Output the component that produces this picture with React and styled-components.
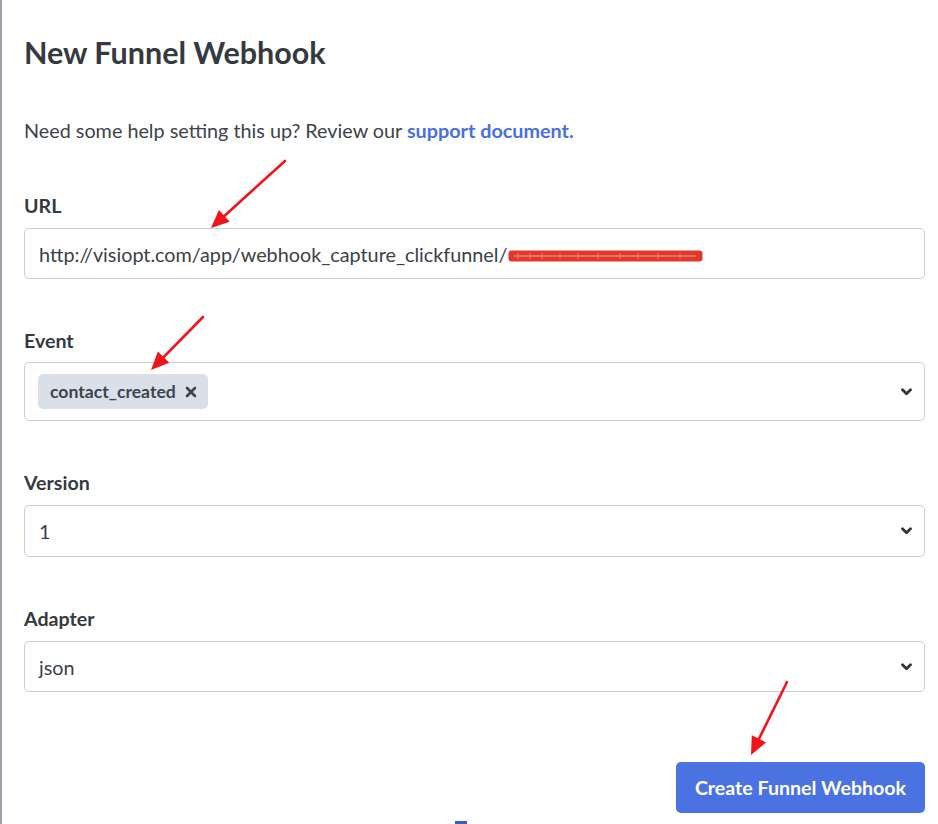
import React from "react";
import styled, { createGlobalStyle } from "styled-components";

const Global = createGlobalStyle`
  html, body {
    margin: 0;
    padding: 0;
    background: #ffffff;
  }
  body {
    font-family: Lato, "Noto Sans", "Liberation Sans", sans-serif;
    color: #343a40;
  }
`;

const Page = styled.div`
  position: relative;
  min-height: 824px;
  box-sizing: border-box;
  border-left: 2px solid #9aa1aa;
  padding: 34px 13px 0 22px;
  overflow: hidden;
`;

const Title = styled.h1`
  margin: 0;
  font-size: 30.5px;
  line-height: 36px;
  font-weight: 700;
  color: #343a40;
`;

const Help = styled.p`
  margin: 48px 0 0;
  font-size: 19.8px;
  line-height: 24px;
  color: #3d434a;
`;

const Link = styled.a`
  color: #4a6fe0;
  font-weight: 700;
  text-decoration: none;
`;

const Field = styled.div`
  margin-top: ${(p) => p.$top}px;
  display: flex;
  flex-direction: column;
  gap: ${(p) => p.$gap}px;
`;

const Label = styled.label`
  font-size: 19.6px;
  line-height: 24px;
  font-weight: 700;
  color: #343a40;
`;

const Box = styled.div`
  height: ${(p) => p.$h}px;
  box-sizing: border-box;
  border: 1px solid #c8cfd9;
  border-radius: 5px;
  display: flex;
  align-items: center;
  justify-content: space-between;
  padding: 0 12px 0 ${(p) => p.$pl}px;
  font-size: 19.8px;
  color: #3b4148;
  background: #fff;
`;

const Value = styled.span`
  display: flex;
  align-items: center;
  white-space: nowrap;
`;

const Redact = styled.span`
  display: inline-block;
  width: 195px;
  height: 12px;
  margin-left: 1px;
  margin-top: -12px;
`;

const Tag = styled.span`
  display: inline-flex;
  align-items: center;
  gap: 9px;
  height: 35px;
  padding: 0 11px 0 12px;
  border-radius: 5px;
  background: #dae0e8;
  font-size: 17.6px;
  font-weight: 700;
  color: #3a4450;
`;

const Footer = styled.div`
  margin-top: 70px;
  display: flex;
  justify-content: flex-end;
`;

const Button = styled.button`
  width: 249px;
  height: 51px;
  border: none;
  border-radius: 5px;
  background: #4b72e1;
  color: #ffffff;
  font-family: inherit;
  font-size: 19.6px;
  font-weight: 700;
  cursor: pointer;
`;

const Overlay = styled.svg`
  position: absolute;
  left: 0;
  top: 0;
  pointer-events: none;
`;

const Mark = styled.div`
  position: absolute;
  left: 453px;
  top: 821px;
  width: 12px;
  height: 3px;
  background: #3a5bd0;
`;

const Chevron = () => (
  <svg width="11" height="8" viewBox="0 0 11 8">
    <path d="M1.5 1.8 L5.5 5.8 L9.5 1.8" fill="none" stroke="#2f353b" strokeWidth="2.8" strokeLinecap="round" strokeLinejoin="round" />
  </svg>
);

const Cross = () => (
  <svg width="12" height="12" viewBox="0 0 12 12">
    <path d="M2 2 L10 10 M10 2 L2 10" stroke="#3a4450" strokeWidth="2.6" strokeLinecap="round" />
  </svg>
);

const Scribble = () => (
  <svg width="195" height="12" viewBox="0 0 195 12">
    <rect x="0.5" y="0.5" width="194" height="11" rx="3" fill="#e0392b" />
    <path d="M6 6 H188" stroke="#f3a59c" strokeWidth="1" />
    <path d="M10 3 V9 M22 3 V9 M34 3 V9 M52 3 V9 M70 3 V9 M90 3 V9 M112 3 V9 M130 3 V9 M150 3 V9 M172 3 V9" stroke="#ee7d70" strokeWidth="1" />
  </svg>
);

const Arrow = ({ x1, y1, x2, y2 }) => {
  const a = Math.atan2(y2 - y1, x2 - x1);
  const len = 18;
  const w = 8;
  const bx = x2 - len * Math.cos(a);
  const by = y2 - len * Math.sin(a);
  const px = -Math.sin(a) * w;
  const py = Math.cos(a) * w;
  return (
    <g>
      <line x1={x1} y1={y1} x2={bx} y2={by} stroke="#f0141a" strokeWidth="2.6" strokeLinecap="round" />
      <polygon points={`${x2},${y2} ${bx + px},${by + py} ${bx - px},${by - py}`} fill="#f0141a" />
    </g>
  );
};

export default function App() {
  return (
    <>
      <Global />
      <Page>
        <Title>New Funnel Webhook</Title>
        <Help>
          Need some help setting this up? Review our <Link href="#">support document.</Link>
        </Help>

        <Field $top={52} $gap={10}>
          <Label>URL</Label>
          <Box $h={51} $pl={14}>
            <Value>
              http://visiopt.com/app/webhook_capture_clickfunnel/
              <Redact>
                <Scribble />
              </Redact>
            </Value>
          </Box>
        </Field>

        <Field $top={50} $gap={9}>
          <Label>Event</Label>
          <Box $h={59} $pl={13}>
            <Tag>
              contact_created
              <Cross />
            </Tag>
            <Chevron />
          </Box>
        </Field>

        <Field $top={50} $gap={10}>
          <Label>Version</Label>
          <Box $h={52} $pl={14}>
            <Value>1</Value>
            <Chevron />
          </Box>
        </Field>

        <Field $top={50} $gap={10}>
          <Label>Adapter</Label>
          <Box $h={51} $pl={14}>
            <Value>json</Value>
            <Chevron />
          </Box>
        </Field>

        <Footer>
          <Button>Create Funnel Webhook</Button>
        </Footer>

        <Overlay width="938" height="824">
          <Arrow x1={283} y1={161} x2={209} y2={228} />
          <Arrow x1={201} y1={317} x2={149} y2={370} />
          <Arrow x1={785} y1={682} x2={749} y2={755} />
        </Overlay>
        <Mark />
      </Page>
    </>
  );
}
